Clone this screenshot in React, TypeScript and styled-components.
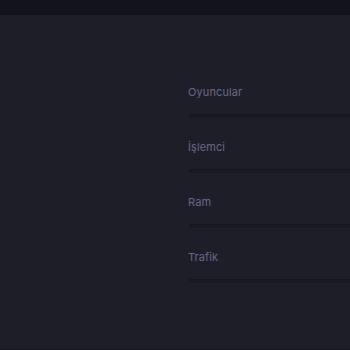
import React from 'react';
import styled, { createGlobalStyle } from 'styled-components';

const GlobalStyle = createGlobalStyle`
  html, body {
    margin: 0;
    padding: 0;
    background: #1e1e29;
  }
  body {
    font-family: "Inter", "Lato", sans-serif;
  }
`;

const Page = styled.div`
  width: 350px;
  height: 350px;
  display: flex;
  flex-direction: column;
  background: #1e1e29;
  overflow: hidden;
  border-bottom: 1px solid #16161f;
  box-sizing: border-box;
`;

const TopBar = styled.div`
  height: 15px;
  flex: none;
  background: #13131e;
`;

const Body = styled.div`
  flex: 1;
  display: grid;
  grid-template-columns: 188px 1fr;
  padding-top: 69px;
`;

const Stats = styled.div`
  display: flex;
  flex-direction: column;
  gap: 21px;
`;

const Stat = styled.div`
  display: flex;
  flex-direction: column;
  gap: 14px;
`;

const Label = styled.span`
  font-size: 11px;
  line-height: 16px;
  color: #6a6786;
  letter-spacing: 0.1px;
`;

const Track = styled.div`
  height: 4px;
  margin-left: 1px;
  border-radius: 2px 0 0 2px;
  background: #191922;
  box-shadow: inset 0 1px 0 #15151d;
`;

const Fill = styled.div<{ $value: number }>`
  height: 100%;
  width: ${(p) => p.$value}%;
  border-radius: inherit;
  background: #6a6786;
`;

const stats = [
  { label: 'Oyuncular', value: 0 },
  { label: 'İşlemci', value: 0 },
  { label: 'Ram', value: 0 },
  { label: 'Trafik', value: 0 },
];

const App = () => {
  return (
    <>
      <GlobalStyle />
      <Page>
        <TopBar />
        <Body>
          <div />
          <Stats>
            {stats.map((s) => (
              <Stat key={s.label}>
                <Label>{s.label}</Label>
                <Track>
                  <Fill $value={s.value} />
                </Track>
              </Stat>
            ))}
          </Stats>
        </Body>
      </Page>
    </>
  );
};

export default App;
